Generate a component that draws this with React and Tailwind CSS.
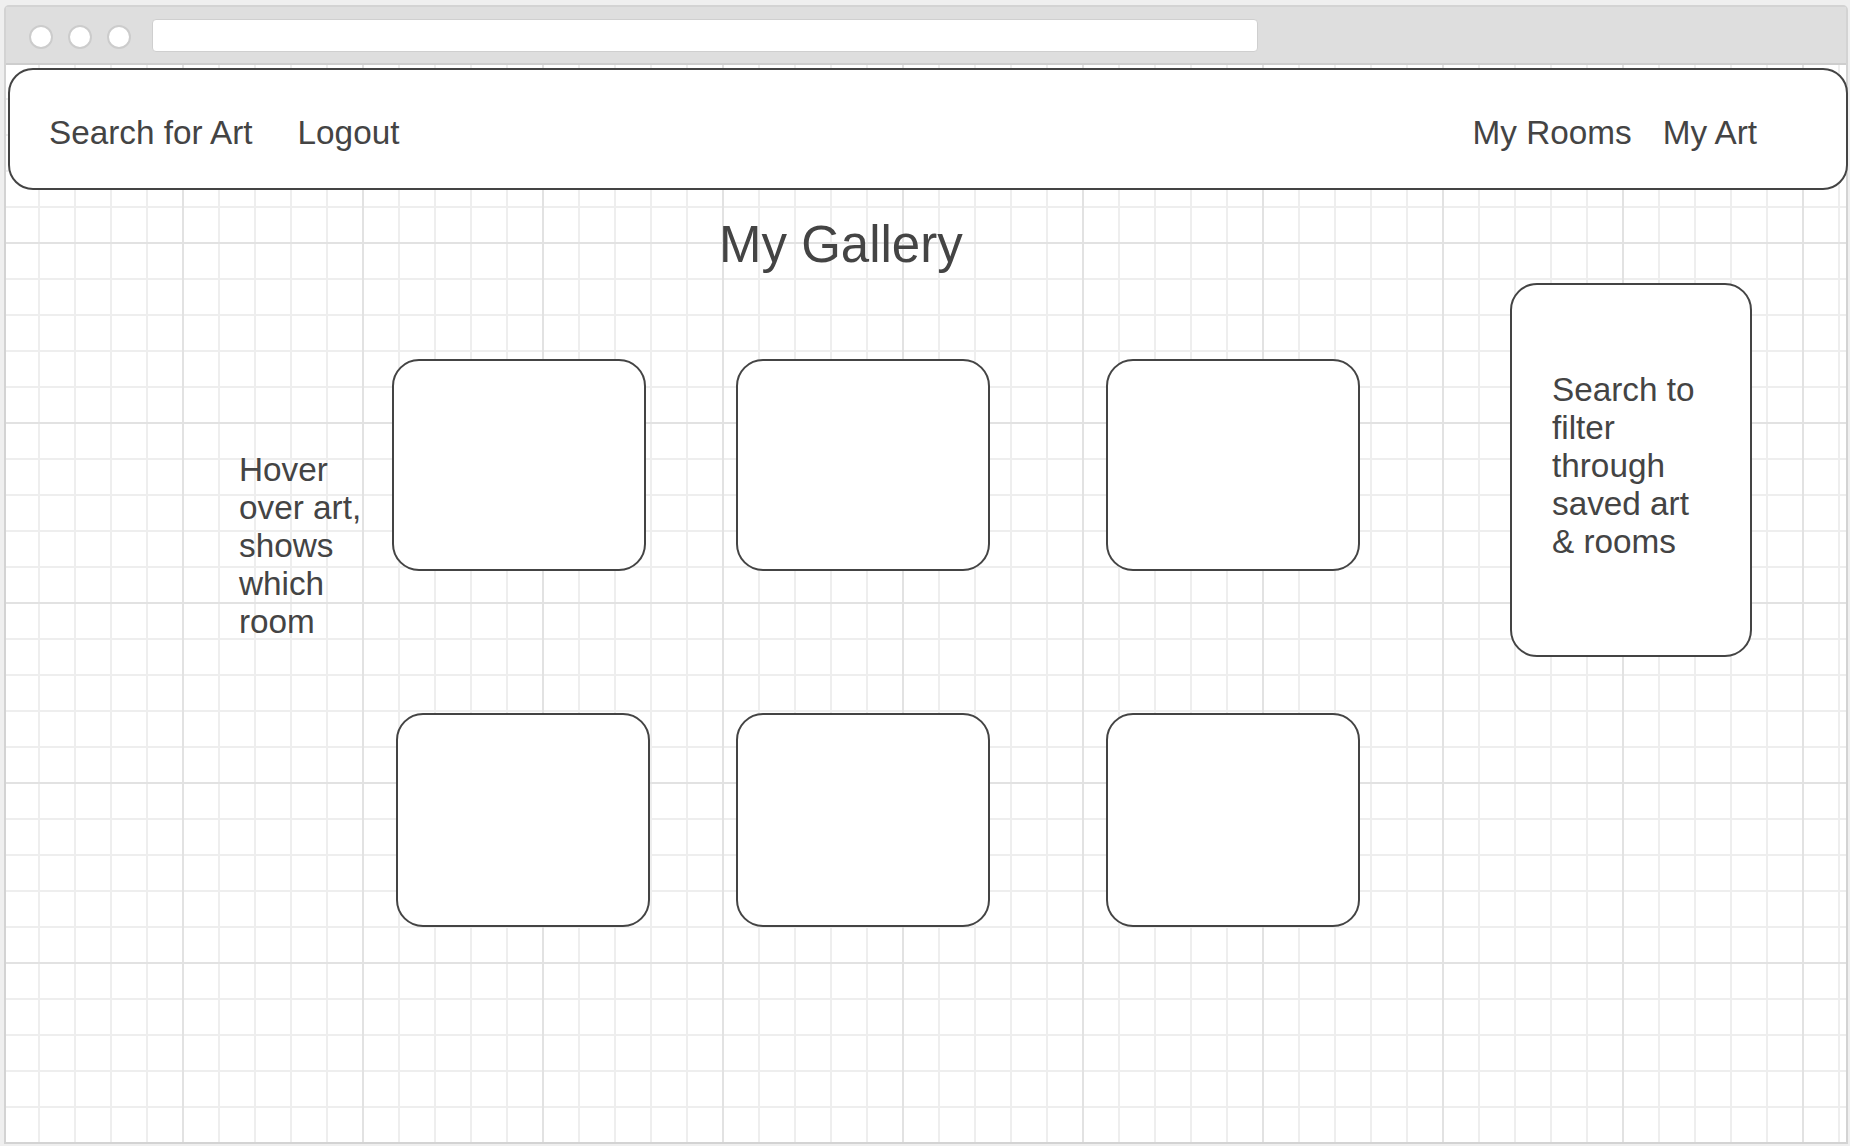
export default function App() {
  const card = "w-[254px] rounded-[27px] border-2 border-[#444444] bg-white shrink-0";
  return (
    <div className="w-[1850px] h-[1146px] bg-[#efefef] pt-[5px] pl-[4px] font-['Liberation_Sans',Arial,sans-serif] text-[#444444] overflow-hidden">
      <div className="w-[1844px] h-[1139px] border-2 border-[#d3d3d3] rounded-t-[5px] flex flex-col overflow-visible">
        {/* title bar */}
        <div className="h-[58px] shrink-0 bg-[#dedede] border-b-2 border-[#cdcdcd] flex items-start">
          <div className="ml-[23px] mt-[18px] flex gap-[15px]">
            <div className="w-[24px] h-[24px] rounded-full bg-white border-2 border-[#cccccc]" />
            <div className="w-[24px] h-[24px] rounded-full bg-white border-2 border-[#cccccc]" />
            <div className="w-[24px] h-[24px] rounded-full bg-white border-2 border-[#cccccc]" />
          </div>
          <div className="ml-[21px] mt-[12px] w-[1106px] h-[33px] bg-white rounded-[4px] border border-[#cfcfcf]" />
        </div>
        {/* canvas */}
        <div className="flex-1 flex flex-col bg-white bg-[linear-gradient(to_right,#e2e2e2_2px,transparent_2px),linear-gradient(to_bottom,#e2e2e2_2px,transparent_2px),linear-gradient(to_right,#eeeeee_2px,transparent_2px),linear-gradient(to_bottom,#eeeeee_2px,transparent_2px)] bg-[size:180px_180px,180px_180px,36px_36px,36px_36px] bg-[position:-4px_-3px]">
          {/* navbar */}
          <div className="ml-[2px] mt-[3px] w-[1840px] h-[122px] shrink-0 rounded-[25px] border-2 border-[#444444] bg-white flex items-start justify-between pt-[44px] pl-[39px] pr-[89px] text-[33.3px] leading-[38px]">
            <div className="flex">
              <span>Search for Art</span>
              <span className="ml-[45px]">Logout</span>
            </div>
            <div className="flex">
              <span>My Rooms</span>
              <span className="ml-[31px]">My Art</span>
            </div>
          </div>
          {/* title */}
          <div className="mt-[26px] ml-[713px] text-[51px] leading-[58px] h-[58px]">My Gallery</div>
          {/* content row */}
          <div className="mt-[9px] flex items-start">
            <div className="w-[386px] shrink-0 pl-[233px] pt-[168px]">
              <p className="w-[135px] text-[33.3px] leading-[38px]">Hover over art, shows which room</p>
            </div>
            <div className="mt-[76px] flex flex-col shrink-0">
              <div className="flex">
                <div className={`${card} h-[212px]`} />
                <div className={`${card} h-[212px] ml-[90px]`} />
                <div className={`${card} h-[212px] ml-[116px]`} />
              </div>
              <div className="flex mt-[142px]">
                <div className={`${card} h-[214px] ml-[4px]`} />
                <div className={`${card} h-[214px] ml-[86px]`} />
                <div className={`${card} h-[214px] ml-[116px]`} />
              </div>
            </div>
            <div className="ml-[150px] w-[242px] h-[374px] shrink-0 rounded-[27px] border-2 border-[#444444] bg-white pl-[40px] pt-[86px]">
              <p className="w-[155px] text-[33.3px] leading-[38px]">Search to filter through saved art &amp; rooms</p>
            </div>
          </div>
        </div>
      </div>
    </div>
  );
}
